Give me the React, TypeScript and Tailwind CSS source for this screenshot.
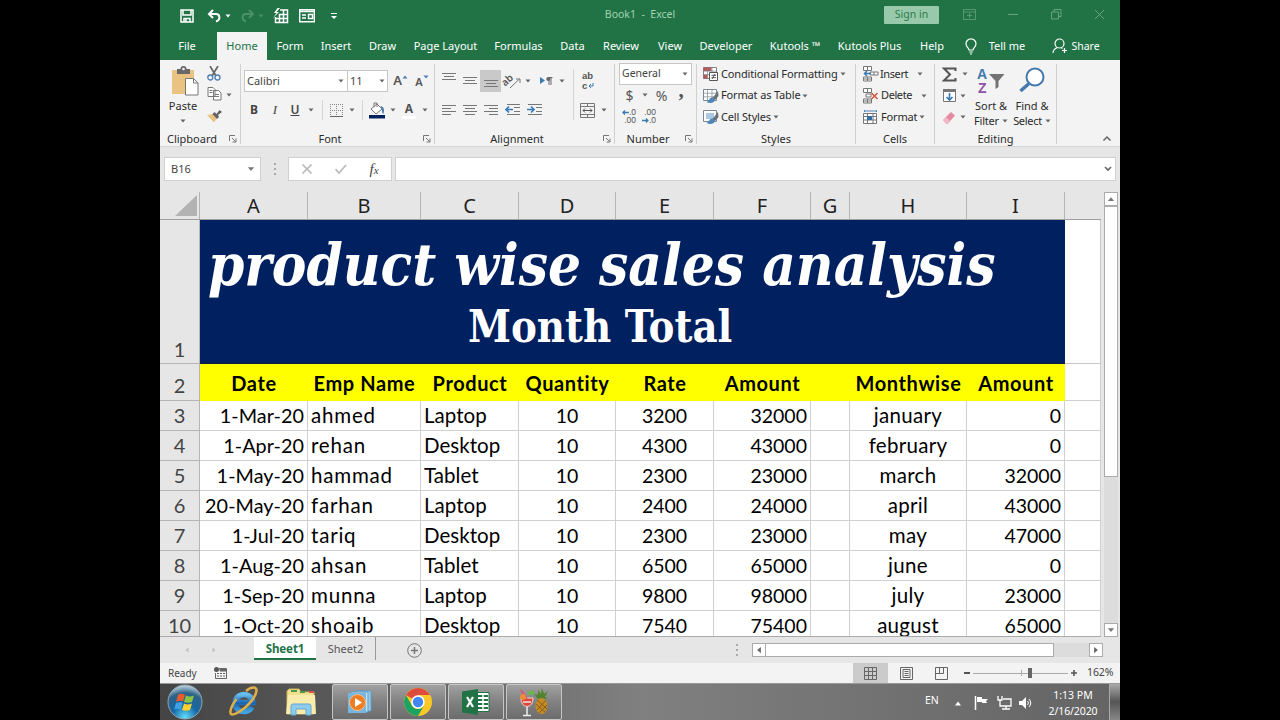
import type { ReactNode } from 'react';
import clsx from 'clsx';

const tabs = [
  { label: 'File', width: 'w-[54px]' },
  { label: 'Home', width: 'w-[50px]', active: true },
  { label: 'Form', width: 'w-[46px]' },
  { label: 'Insert', width: 'w-[46px]' },
  { label: 'Draw', width: 'w-[47px]' },
  { label: 'Page Layout', width: 'w-[79px]' },
  { label: 'Formulas', width: 'w-[67px]' },
  { label: 'Data', width: 'w-[41px]' },
  { label: 'Review', width: 'w-[56px]' },
  { label: 'View', width: 'w-[42px]' },
  { label: 'Developer', width: 'w-[70px]' },
  { label: 'Kutools ™', width: 'w-[68px]' },
  { label: 'Kutools Plus', width: 'w-[81px]' },
  { label: 'Help', width: 'w-[44px]' },
];

const columns = [
  { name: 'A', width: 'w-[108px]', header: 'Date', align: 'justify-end pr-[3px] text-[19.8px] tracking-[0.05px]' },
  { name: 'B', width: 'w-[113px]', header: 'Emp Name', align: 'justify-start pl-[3px] text-[20.5px] tracking-[0.8px]' },
  { name: 'C', width: 'w-[98px]', header: 'Product', align: 'justify-start pl-[3px] text-[20.5px] tracking-[0.05px]' },
  { name: 'D', width: 'w-[97px]', header: 'Quantity', align: 'justify-center' },
  { name: 'E', width: 'w-[98px]', header: 'Rate', align: 'justify-center' },
  { name: 'F', width: 'w-[97px]', header: 'Amount', align: 'justify-end pr-[3px]' },
  { name: 'G', width: 'w-[39px]', header: '', align: 'justify-center' },
  { name: 'H', width: 'w-[117px]', header: 'Monthwise', align: 'justify-center text-[20.5px] tracking-[0.3px]' },
  { name: 'I', width: 'w-[98px]', header: 'Amount', align: 'justify-end pr-[3px]' },
];

const rows = [
  ['1-Mar-20', 'ahmed', 'Laptop', '10', '3200', '32000', '', 'january', '0'],
  ['1-Apr-20', 'rehan', 'Desktop', '10', '4300', '43000', '', 'february', '0'],
  ['1-May-20', 'hammad', 'Tablet', '10', '2300', '23000', '', 'march', '32000'],
  ['20-May-20', 'farhan', 'Laptop', '10', '2400', '24000', '', 'april', '43000'],
  ['1-Jul-20', 'tariq', 'Desktop', '10', '2300', '23000', '', 'may', '47000'],
  ['1-Aug-20', 'ahsan', 'Tablet', '10', '6500', '65000', '', 'june', '0'],
  ['1-Sep-20', 'munna', 'Laptop', '10', '9800', '98000', '', 'july', '23000'],
  ['1-Oct-20', 'shoaib', 'Desktop', '10', '7540', '75400', '', 'august', '65000'],
];

function Slot({ className, children }: { className?: string; children?: ReactNode }) {
  return <div className={clsx('flex shrink-0 items-center justify-center', className)}>{children}</div>;
}

function Arrow({ className = 'text-[#666]' }: { className?: string }) {
  return (
    <svg width="6" height="4" viewBox="0 0 6 4" className={clsx('shrink-0', className)}>
      <path d="M.5 .5h5L3 3.5z" fill="currentColor" />
    </svg>
  );
}

function Launcher() {
  return (
    <svg width="8" height="8" viewBox="0 0 8 8" fill="none" stroke="#777">
      <path d="M.5 6V.5H6M3 3l3.5 3.5M7 3.500V7H3.500" />
    </svg>
  );
}

function Lines({ d }: { d: string }) {
  return (
    <svg width="14" height="14" viewBox="0 0 14 14" stroke="#777" fill="none">
      <path d={d} />
    </svg>
  );
}

function Group({ label, width, labelWidth, launcher, children }: { label: string; width: string; labelWidth: string; launcher?: boolean; children: ReactNode }) {
  return (
    <div className={clsx('flex h-[86px] shrink-0 flex-col', width)}>
      <div className="flex h-[72px] flex-1">
        <div className="min-w-0 flex-1">{children}</div>
        <div className="mt-[4px] w-px bg-[#d0d0d0]" />
      </div>
      <div className="flex h-[14px] items-center">
        <div className={clsx('text-center text-[11px] leading-[14px]', labelWidth)}>{label}</div>
        {launcher && <Launcher />}
        <div className="ml-auto h-[12px] w-px self-start bg-[#d0d0d0]" />
      </div>
    </div>
  );
}

/* Title bar with quick access icons */
function TitleBar() {
  return (
    <div className="flex h-[32px] items-center text-[11px]">
      <Slot className="ml-[20px] w-[14px]">
        <svg width="14" height="14" viewBox="0 0 14 14" fill="none" stroke="#fff" strokeWidth="1.500">
          <path d="M1 1h12v12H1zM3 1v5h8V1M4 13V9.500h6V13M6 10v3" />
        </svg>
      </Slot>
      <Slot className="ml-[13px] w-[15px]">
        <svg width="15" height="14" viewBox="0 0 15 14" fill="none" stroke="#fff" strokeWidth="2">
          <path d="M6 1L2 5l4 4M2 5h7c4 0 5 6 0 7.500" />
        </svg>
      </Slot>
      <Slot className="w-[12px]"><Arrow className="text-white" /></Slot>
      <Slot className="ml-[6px] w-[15px]">
        <svg width="15" height="14" viewBox="0 0 15 14" fill="none" stroke="#4d9168" strokeWidth="2">
          <path d="M9 1l4 4-4 4M13 5H6C2 5 1 11 6 12.500" />
        </svg>
      </Slot>
      <Slot className="w-[12px]"><Arrow className="text-[#4d9168]" /></Slot>
      <Slot className="ml-[5px] w-[17px]">
        <svg width="17" height="16" viewBox="0 0 17 16" fill="none" stroke="#fff">
          <path d="M8 2h7.500v12.500H3.500V9M3.500 10.500h12M7 6.500h8.500M7.500 6v8.500M11.500 2v12.500" strokeWidth="1.500" />
          <path d="M5.500 0L2 5h2.500L1 10l6-6H4.500L8 0z" fill="#fff" stroke="none" />
        </svg>
      </Slot>
      <Slot className="ml-[10px] w-[16px]">
        <svg width="16" height="14" viewBox="0 0 16 14" fill="none" stroke="#fff">
          <path d="M.7 .7h14.600v12H.7zM.7 2.500h14.600M3 6h4M3 9h4M9.500 5.500h4v4h-4z" strokeWidth="1.400" />
        </svg>
      </Slot>
      <Slot className="ml-[15px] w-[8px]">
        <svg width="8" height="8" viewBox="0 0 8 8"><path d="M1 1.500h6" stroke="#fff" /><path d="M1 4h6L4 7z" fill="#fff" /></svg>
      </Slot>
      <div className="ml-[265px] w-[74px] whitespace-pre pb-[3px] text-center text-[10.500px] text-[#a3d2b2]">Book1  -  Excel</div>
      <div className="ml-[207px] mb-[3px] flex h-[18px] w-[55px] items-center justify-center rounded-[1px] bg-[#98c9aa] text-[10.500px] text-[#2c7a4a]">Sign in</div>
      <Slot className="ml-[24px] mb-[3px] w-[14px]">
        <svg width="14" height="11" viewBox="0 0 14 11" fill="none" stroke="#579a71"><path d="M.5 .5h12v10H.5zM.5 3h12M4 6.500h5M6.500 4v5" /></svg>
      </Slot>
      <Slot className="ml-[30px] mb-[3px] w-[12px]"><span className="h-px w-[10px] bg-[#6ba580]" /></Slot>
      <Slot className="ml-[32px] mb-[3px] w-[11px]">
        <svg width="11" height="11" viewBox="0 0 11 11" fill="none" stroke="#6ba580"><path d="M.5 3h7v7h-7zM3 3V.5h7v7H7.500" /></svg>
      </Slot>
      <Slot className="ml-[32px] mb-[3px] w-[11px]">
        <svg width="11" height="11" viewBox="0 0 11 11" stroke="#6ba580"><path d="M1 1l9 9M10 1l-9 9" /></svg>
      </Slot>
    </div>
  );
}

function RibbonTabs() {
  return (
    <div className="flex h-[28px] text-[11px] text-white">
      {tabs.map((tab, index) => (
        <div
          key={index}
          className={clsx('flex shrink-0 items-center justify-center whitespace-nowrap', tab.width, tab.active && 'ml-[3px] bg-[#f3f3f3] text-[#217346]')}
        >
          {tab.label}
        </div>
      ))}
      <Slot className="ml-[6px] w-[22px]">
        <svg width="12" height="17" viewBox="0 0 12 17" fill="none" stroke="#fff" strokeWidth="1.200">
          <path d="M4 12c0-2-3-3-3-6.200a5 5 0 0 1 10 0C11 9 8 10 8 12zM4.200 14h3.600M5 16h2" />
        </svg>
      </Slot>
      <div className="ml-[-1px] flex w-[52px] items-center justify-center text-[11px]">Tell me</div>
      <Slot className="ml-[17px] w-[20px]">
        <svg width="16" height="16" viewBox="0 0 16 16" fill="none" stroke="#fff" strokeWidth="1.200">
          <circle cx="7.500" cy="5.500" r="4.500" /><path d="M1 15c0-3 2-4.500 4.500-5.500M10 12.500h5M12.500 10v5M9 9.500l1.500 1" />
        </svg>
      </Slot>
      <div className="flex w-[31px] items-center justify-center pt-px text-[10.500px]">Share</div>
    </div>
  );
}

function FormatIcon({ kind }: { kind: 'rules' | 'table' | 'cell' }) {
  return (
    <svg width="16" height="16" viewBox="0 0 16 16" fill="none" stroke="#7d8790">
      <path d="M.5 1.500h13v11H.5z" fill="#fff" />
      {kind === 'rules' && <path d="M.5 1.500h8v3.500h-8zM.5 8.500h4v4h-4z" fill="#b8564f" stroke="none" />}
      {kind === 'cell' && <path d="M3 4h8v6H3z" fill="#a9c8e4" stroke="none" />}
      {kind !== 'cell' && <path d="M.5 5.200h13M.5 8.800h13M4.500 1.500v11M9 1.500v11" strokeWidth=".7" />}
      {kind === 'rules' ? (
        <path d="M6.500 6.500h8v8h-8zM8.500 9.300h4.500M8.500 11.700h4.500M12 8l-3 5" fill="#fff" stroke="#555" />
      ) : (
        <>
          <path d="M15 3l-5.500 7 2.500 2L15.500 8z" fill="#6b6f74" stroke="none" />
          <path d="M10 9.500c-4-.5-3.500 3.500-6.500 4.500 3.500 2 8.500 1 8.500-2.500z" fill="#4d87ba" stroke="none" />
        </>
      )}
    </svg>
  );
}

function CellsIcon({ kind }: { kind: 'insert' | 'delete' | 'format' }) {
  return (
    <svg width="16" height="16" viewBox="0 0 16 16" fill="none" stroke="#777">
      {kind === 'format' ? (
        <>
          <path d="M.5 4.500h13v10H.5zM.5 7.500h13M.5 11h13M4.500 4.500v10M10 4.500v10" fill="#fff" />
          <path d="M4 7h5v4H4z" fill="#2f6fa8" stroke="none" />
          <path d="M1.500 1v2M1.500 2h12M13.500 1v2" stroke="#4d87ba" />
        </>
      ) : (
        <>
          <path d="M.5 .5h8v4h-8zM.5 11h8v4h-8zM4.500 .5v4M4.500 11v4M.5 13h8" fill="#fff" />
          {kind === 'insert' ? (
            <>
              <path d="M7 6h8v3H7zM11 6v3" fill="#fff" />
              <path d="M8 7.500H1M4 5L1.500 7.500 4 10" stroke="#3a7ab5" strokeWidth="1.500" />
            </>
          ) : (
            <>
              <path d="M3 6h5v3H3z" fill="#fff" />
              <path d="M8.500 5l6 6M14.500 5l-6 6" stroke="#d2573f" strokeWidth="1.500" />
            </>
          )}
        </>
      )}
    </svg>
  );
}

function Ribbon() {
  return (
    <div className="flex h-[87px] border-b border-[#d5d5d5] bg-[#f3f3f3] text-[11px] text-[#2b2b2b]">
      <Group label="Clipboard" width="w-[81px]" labelWidth="w-[69px] pr-[5px]" launcher>
        <div className="flex">
          <div className="flex w-[46px] flex-col items-center pt-[6px]">
            <svg width="28" height="30" viewBox="0 0 28 30" fill="none" className="ml-[3px]">
              <path d="M1 4h22v24H1z" fill="#eac282" />
              <path d="M6 8V3h3.500a3 3 0 0 1 6 0H19v5z" fill="#686868" /><circle cx="12.500" cy="3" r="1.300" fill="#f3f3f3" />
              <path d="M14.500 12.500h8l4.500 4.500v12H14.500z" fill="#fff" stroke="#777" /><path d="M22.500 12.500V17H27" stroke="#777" />
            </svg>
            <div className="mt-[2px] leading-[16px]">Paste</div>
            <div className="mt-[5px] flex"><Arrow /></div>
          </div>
          <div className="w-[16px] pt-[4px]">
            <Slot className="h-[18px]">
              <svg width="14" height="15" viewBox="0 0 14 15" fill="none">
                <path d="M3 0l6 10M11 0L5 10" stroke="#666" strokeWidth="1.700" />
                <circle cx="3.300" cy="11.500" r="2.500" stroke="#4d7fb3" strokeWidth="1.300" /><circle cx="10.500" cy="11.500" r="2.500" stroke="#4d7fb3" strokeWidth="1.300" />
              </svg>
            </Slot>
            <Slot className="h-[24px]">
              <svg width="15" height="14" viewBox="0 0 15 14" stroke="#777" fill="#fff">
                <path d="M1 .5h5l2 2v7H1zM2.500 3.500h3M2.500 5.500h3M6.500 3.500h5l2.500 2.500v7H6.500zM8 7.500h4M8 9.500h4" />
              </svg>
            </Slot>
            <Slot className="h-[20px]">
              <svg width="15" height="14" viewBox="0 0 15 14">
                <path d="M0 6l6-1 4 4-3 4.500z" fill="#eac282" /><path d="M5.500 5l2-2 2 2 3-4 2.500 2-4 3 1 2-2 2z" fill="#626262" />
              </svg>
            </Slot>
          </div>
          <Slot className="mt-[24px] h-[22px] w-[14px]"><Arrow /></Slot>
        </div>
      </Group>

      <Group label="Font" width="w-[194px]" labelWidth="w-[182px] pr-[4px]" launcher>
        <div className="flex pt-[10px] pl-[3px] text-[#444]">
          <div className="flex h-[22px] w-[104px] items-center justify-between border border-[#c6c6c6] bg-white pl-[2px] pr-[3px]">Calibri<Arrow /></div>
          <div className="-ml-px flex h-[22px] w-[41px] items-center justify-between border border-[#c6c6c6] bg-white px-[2px]">11<Arrow /></div>
          <Slot className="w-[25px] text-[13px] font-semibold text-[#555]">A<Arrow className="mb-[9px] rotate-180 text-[#4d7fb3]" /></Slot>
          <Slot className="w-[18px] pt-[2px] text-[11px] font-semibold text-[#555]">A<Arrow className="mb-[11px] text-[#4d7fb3]" /></Slot>
        </div>
        <div className="mt-[7px] flex h-[22px] pl-[3px] text-[12px] text-[#444]">
          <Slot className="w-[20px] font-bold">B</Slot>
          <Slot className="w-[22px] font-['Liberation_Serif'] text-[13px] italic">I</Slot>
          <Slot className="w-[18px] font-semibold underline">U</Slot>
          <Slot className="w-[14px]"><Arrow /></Slot>
          <Slot className="w-[8px]"><span className="h-[20px] w-px bg-[#d5d5d5]" /></Slot>
          <Slot className="w-[20px]">
            <svg width="13" height="13" viewBox="0 0 13 13" fill="none" stroke="#888"><path d="M.5 0v12M6.500 0v12M12.500 0v12M0 .5h13M0 6.500h13" strokeDasharray="1 1" /><path d="M0 12.500h13" stroke="#666" /></svg>
          </Slot>
          <Slot className="w-[12px]"><Arrow /></Slot>
          <Slot className="w-[8px]"><span className="h-[20px] w-px bg-[#d5d5d5]" /></Slot>
          <Slot className="w-[22px]">
            <svg width="16" height="17" viewBox="0 0 16 17" fill="none">
              <path d="M2 7l6-5 5 5-6 5z" fill="#fff" stroke="#777" /><path d="M5 5V1h3v4" stroke="#777" />
              <path d="M11.500 4c4 1 4 4 3 8-2-1-1-4-3-8z" fill="#4d7fb3" /><path d="M0 13h16v3.500H0z" fill="#002060" />
            </svg>
          </Slot>
          <Slot className="w-[10px]"><Arrow /></Slot>
          <Slot className="w-[22px]"><span className="flex h-[17px] w-[14px] items-start justify-center border-b-[3px] border-white text-[12px] font-bold leading-[14px] text-[#555]">A</span></Slot>
          <Slot className="w-[9px]"><Arrow /></Slot>
        </div>
      </Group>

      <Group label="Alignment" width="w-[180px]" labelWidth="w-[168px] pr-[4px]" launcher>
        <div className="flex">
          <div className="w-[133px]">
            <div className="mt-[10px] flex h-[22px] pl-[3px]">
              <Slot className="w-[22px] pb-[8px]"><Lines d="M0 3.500h14M2 6.500h10M0 9.500h14" /></Slot>
              <Slot className="w-[20px]"><Lines d="M0 3.500h14M2 6.500h10M0 9.500h14" /></Slot>
              <Slot className="w-[21px] bg-[#c9c9c9] pt-[6px]"><Lines d="M0 3.500h14M2 6.500h10M0 9.500h14" /></Slot>
              <Slot className="w-[24px]">
                <svg width="16" height="15" viewBox="0 0 16 15" className="overflow-visible"><text x="-1" y="10" fontSize="10" fontWeight="600" fill="#555" transform="rotate(-42 3 10)">ab</text><path d="M5 14L14.500 5M11 5h4v4" fill="none" stroke="#777" /></svg>
              </Slot>
              <Slot className="w-[6px]"><Arrow /></Slot>
              <Slot className="ml-[3px] w-[24px]">
                <svg width="13" height="10" viewBox="0 0 13 10"><path d="M0 1l5 3.500L0 8z" fill="#3a7ab5" /><path d="M9 9V1.500h3.500M11 1v8" stroke="#666" fill="none" /><circle cx="8.300" cy="3" r="2" fill="#666" /></svg>
              </Slot>
              <Slot className="w-[8px]"><Arrow /></Slot>
            </div>
            <div className="mt-[7px] flex h-[22px] pl-[3px]">
              <Slot className="w-[22px]"><Lines d="M0 2.500h14M0 5.500h9M0 8.500h14M0 11.500h9" /></Slot>
              <Slot className="w-[20px]"><Lines d="M0 2.500h14M2 5.500h10M0 8.500h14M2 11.500h10" /></Slot>
              <Slot className="w-[21px]"><Lines d="M0 2.500h14M5 5.500h9M0 8.500h14M5 11.500h9" /></Slot>
              <Slot className="w-[24px]">
                <svg width="16" height="14" viewBox="0 0 16 14" fill="none" stroke="#777"><path d="M2 1.500h13M9 4.500h6M9 8.500h6M2 11.500h13" /><path d="M8 6.500H1M4 3.500l-3 3 3 3" stroke="#3a7ab5" strokeWidth="1.700" /></svg>
              </Slot>
              <Slot className="w-[19px]">
                <svg width="16" height="14" viewBox="0 0 16 14" fill="none" stroke="#777"><path d="M1 1.500h14M9 4.500h6M9 8.500h6M1 11.500h14" /><path d="M0 6.500h7M4 3.500l3 3-3 3" stroke="#3a7ab5" strokeWidth="1.700" /></svg>
              </Slot>
            </div>
          </div>
          <div className="ml-[5px] mt-[9px] h-[51px] w-px bg-[#d5d5d5]" />
          <div className="w-[38px]">
            <Slot className="mt-[10px] h-[22px] w-[28px]">
              <svg width="14" height="18" viewBox="0 0 14 18" fill="#555" className="overflow-visible font-['Liberation_Sans',sans-serif]">
                <text x="1" y="6.500" fontSize="9.500" fontWeight="600">ab</text>
                <text x="1" y="17" fontSize="9.500" fontWeight="600">c</text>
                <path d="M12 11v3H8.500M10 12l-2 2 2 2" fill="none" stroke="#3a7ab5" />
              </svg>
            </Slot>
            <div className="mt-[7px] flex h-[22px]">
              <Slot className="w-[27px]">
                <svg width="15" height="15" viewBox="0 0 15 15" fill="none" stroke="#777"><path d="M.5 .5h14v14H.5zM.5 3.500h14M.5 11.500h14M7.500 .5v3M7.500 11.500v3" /><path d="M3 7.500h9M5 5.500l-2 2 2 2M10 5.500l2 2-2 2" stroke="#555" /></svg>
              </Slot>
              <Slot className="w-[6px]"><Arrow /></Slot>
            </div>
          </div>
        </div>
      </Group>

      <Group label="Number" width="w-[82px]" labelWidth="w-[70px] pr-[4px]" launcher>
        <div className="ml-[4px] mt-[3px] flex h-[22px] w-[73px] items-center justify-between border border-[#c6c6c6] bg-white pl-[2px] pr-[3px] text-[10.500px] text-[#444]">General<Arrow /></div>
        <div className="flex h-[20px] pl-[4px] text-[14px] text-[#555]">
          <Slot className="w-[21px]">$</Slot>
          <Slot className="w-[9px]"><Arrow /></Slot>
          <Slot className="w-[25px]">%</Slot>
          <Slot className="w-[14px] pb-[9px] font-['Liberation_Serif'] text-[21px] font-bold">,</Slot>
        </div>
        <div className="flex h-[22px] gap-[6px] pl-[7px] pt-[2px] font-['Liberation_Sans',sans-serif] text-[8.500px] leading-[8px] text-[#555]">
          <div className="w-[14px] pt-px text-right">
            <div className="flex items-center justify-end"><svg width="7" height="7" viewBox="0 0 7 7" fill="none" stroke="#3a7ab5"><path d="M7 3.500H1M3 1.500l-2 2 2 2" strokeWidth="1.300" /></svg>.0</div>
            <div>.00</div>
          </div>
          <div className="w-[14px] pt-px text-right">
            <div>.00</div>
            <div className="flex items-center justify-end"><svg width="7" height="7" viewBox="0 0 7 7" fill="none" stroke="#3a7ab5"><path d="M0 3.500h6M4 1.500l2 2-2 2" strokeWidth="1.300" /></svg>.0</div>
          </div>
        </div>
      </Group>

      <Group label="Styles" width="w-[159px]" labelWidth="w-[158px]">
        <div className="flex flex-col pl-[6px] pt-[3px]">
          <div className="flex h-[22px] items-center"><FormatIcon kind="rules" /><span className="ml-[2px] w-[119px] whitespace-nowrap tracking-[-0.15px]">Conditional Formatting</span><Arrow /></div>
          <div className="flex h-[21px] items-center"><FormatIcon kind="table" /><span className="ml-[2px] w-[81px] whitespace-nowrap tracking-[-0.15px]">Format as Table</span><Arrow /></div>
          <div className="flex h-[22px] items-center"><FormatIcon kind="cell" /><span className="ml-[2px] w-[52px] whitespace-nowrap tracking-[-0.15px]">Cell Styles</span><Arrow /></div>
        </div>
      </Group>

      <Group label="Cells" width="w-[79px]" labelWidth="w-[78px]">
        <div className="flex flex-col pl-[7px] pt-[3px] tracking-[-0.15px]">
          <div className="flex h-[22px] items-center"><CellsIcon kind="insert" /><span className="ml-[1px] w-[37px] tracking-[-0.4px]">Insert</span><Arrow /></div>
          <div className="flex h-[21px] items-center"><CellsIcon kind="delete" /><span className="ml-[2px] w-[40px] tracking-[-0.4px]">Delete</span><Arrow /></div>
          <div className="flex h-[22px] items-center"><CellsIcon kind="format" /><span className="ml-[2px] w-[38px]">Format</span><Arrow /></div>
        </div>
      </Group>

      <Group label="Editing" width="w-[122px]" labelWidth="w-[121px]">
        <div className="flex">
          <div className="w-[35px] pl-[7px] pt-[3px]">
            <div className="flex h-[22px] items-center gap-[5px]">
              <svg width="15" height="15" viewBox="0 0 15 15" fill="none" stroke="#555" strokeWidth="2"><path d="M13.500 4V1.500H2l6 6-6 6h11.500V11" /></svg>
              <Arrow />
            </div>
            <div className="flex h-[21px] items-center gap-[3px]">
              <svg width="15" height="15" viewBox="0 0 15 15" fill="none"><path d="M1.500 1.500h12v12h-12z" fill="#fff" stroke="#777" /><path d="M1 1h13v3H1z" fill="#777" /><path d="M7.500 5v7M4.500 9l3 3 3-3" stroke="#3a7ab5" strokeWidth="1.700" /></svg>
              <Arrow />
            </div>
            <div className="flex h-[22px] items-center gap-[3px]">
              <svg width="15" height="13" viewBox="0 0 15 13"><path d="M1 9l8-8 4 3.500-7 8H4z" fill="#e58a9f" /><path d="M1 9l3-3 4 4-2 2.500H4z" fill="#f0b9c4" /></svg>
              <Arrow />
            </div>
          </div>
          <div className="flex w-[42px] flex-col items-center pt-[6px] leading-[15px]">
            <svg width="30" height="28" viewBox="0 0 30 28" className="overflow-visible font-['Liberation_Sans',sans-serif]">
              <text x="1" y="12.500" fontSize="14" fontWeight="600" fill="#3f78ae">A</text>
              <text x="2" y="26.500" fontSize="14" fontWeight="600" fill="#9250a8">Z</text>
              <path d="M13 8h15.500l-6 7v6l-3 2v-8z" fill="#737373" />
            </svg>
            <span className="mt-[4px] whitespace-nowrap">Sort &amp;</span>
            <span className="flex items-center gap-[3px] tracking-[-0.2px]">Filter<Arrow /></span>
          </div>
          <div className="flex w-[40px] flex-col items-center pt-[7px] leading-[15px]">
            <svg width="28" height="27" viewBox="0 0 28 27" fill="none"><circle cx="17" cy="10" r="8.500" fill="#fff" stroke="#4379ad" strokeWidth="2" /><path d="M11 16.500l-8.500 7.500" stroke="#4379ad" strokeWidth="3.500" /></svg>
            <span className="mt-[4px] whitespace-nowrap">Find &amp;</span>
            <span className="flex items-center gap-[3px] tracking-[-0.3px]">Select<Arrow /></span>
          </div>
        </div>
      </Group>
      <div className="ml-auto flex items-end pb-[4px] pr-[8px]">
        <svg width="10" height="7" viewBox="0 0 10 7" fill="none" stroke="#666" strokeWidth="1.500"><path d="M1.500 5.500L5 2l3.500 3.500" /></svg>
      </div>
    </div>
  );
}

function FormulaBar() {
  return (
    <div className="flex h-[45px] items-center bg-[#e6e6e6] pb-px pl-[4px] pr-[4px]">
      <div className="flex h-[24px] w-[97px] items-center justify-between border border-[#d0d0d0] bg-white pl-[6px] pr-[6px] text-[11px] text-[#444]">B16<Arrow className="scale-125 text-[#777]" /></div>
      <Slot className="w-[27px]">
        <svg width="2" height="12" viewBox="0 0 2 12" fill="#aaa"><path d="M0 0h2v2H0zM0 5h2v2H0zM0 10h2v2H0z" /></svg>
      </Slot>
      <div className="flex h-[24px] w-[104px] items-center border border-[#d0d0d0] bg-white">
        <Slot className="w-[35px]"><svg width="10" height="10" viewBox="0 0 10 10" stroke="#bcbcbc" strokeWidth="1.600"><path d="M.5 .5l9 9M9.500 .5l-9 9" /></svg></Slot>
        <Slot className="w-[33px]"><svg width="12" height="10" viewBox="0 0 12 10" fill="none" stroke="#bcbcbc" strokeWidth="1.800"><path d="M.5 5L4 9l7-8" /></svg></Slot>
        <Slot className="w-[34px] font-['Liberation_Serif'] text-[15px] italic text-[#444]">f<span className="pt-[3px] text-[11px]">x</span></Slot>
      </div>
      <div className="ml-[3px] flex h-[24px] flex-1 items-center justify-end border border-[#d0d0d0] bg-white pr-[3px]">
        <svg width="8" height="6" viewBox="0 0 8 6" fill="none" stroke="#666" strokeWidth="1.600"><path d="M1 1l3 3 3-3" /></svg>
      </div>
    </div>
  );
}

function Sheet() {
  return (
    <div className="flex h-[445px] bg-[#e6e6e6]">
      <div className="h-[445px] w-[941px] overflow-hidden border-b border-[#ababab] font-['Lato',sans-serif] text-[19.500px] text-black [font-variant-ligatures:none]">
        {/* Column headers */}
        <div className="flex h-[28px] border-b border-[#9f9f9f] font-['Noto_Sans',sans-serif]">
          <div className="flex w-[40px] items-end justify-end border-r border-[#b5b5b5] pb-[3px] pr-[2px]">
            <svg width="22" height="21" viewBox="0 0 22 21"><path d="M22 0v21H0z" fill="#b3b3b3" /></svg>
          </div>
          {columns.map((col) => (
            <div key={col.name} className={clsx('flex items-center justify-center border-r border-[#b5b5b5] text-[20px] text-[#222]', col.width)}>{col.name}</div>
          ))}
        </div>
        {/* Title row */}
        <div className="flex h-[144px]">
          <div className="flex w-[40px] items-end justify-center border-r border-b border-[#b5b5b5] pb-[2px] text-[20px] leading-[24px] text-[#444]">1</div>
          <div className="flex w-[865px] flex-col border-b border-[#101c40] bg-[#002060] font-['DejaVu_Serif_Condensed','DejaVu_Serif',serif] font-bold whitespace-nowrap text-white">
            <div className="ml-[8px] mt-[10px] h-[70px] w-[790px] origin-left scale-x-[0.996] text-[58px] leading-[70px] italic">product wise sales analysis</div>
            <div className="ml-[268px] mt-[2px] h-[50px] w-[270px] origin-left scale-x-[0.98] text-[44px] leading-[50px]">Month Total</div>
          </div>
          <div className="w-[36px] border-r border-b border-[#c8c8c8] bg-white" />
        </div>
        <div className="flex h-[37px]">
          <div className="flex w-[40px] items-center justify-center border-r border-b border-[#b5b5b5] pt-[6px] text-[20px] text-[#444]">2</div>
          <div className="flex bg-[#ffff00] text-[20px] font-bold tracking-[0.6px]">
            {columns.map((col) => (
              <div key={col.name} className={clsx('flex items-center justify-center whitespace-nowrap', col.width)}>{col.header}</div>
            ))}
          </div>
          <div className="w-[36px] border-r border-b border-[#d0d0d0] bg-white" />
        </div>
        {rows.map((row, r) => (
          <div key={r} className="flex h-[30px]">
            <div className="flex w-[40px] items-center justify-center border-r border-b border-[#b5b5b5] pb-[2px] text-[20px] text-[#444]">{r + 3}</div>
            {row.map((value, c) => (
              <div key={c} className={clsx('flex items-center border-r border-b border-[#d0d0d0] bg-white whitespace-nowrap', columns[c].width, columns[c].align)}>{value}</div>
            ))}
            <div className="w-[36px] border-r border-b border-[#d0d0d0] bg-white" />
          </div>
        ))}
      </div>
      {/* Vertical scrollbar */}
      <div className="ml-[3px] flex w-[14px] flex-col bg-[#dcdcdc]">
        <Slot className="h-[14px] border border-[#ababab] bg-white"><Arrow className="scale-125 rotate-180 text-[#777]" /></Slot>
        <div className="h-[271px] border border-[#ababab] bg-white" />
        <Slot className="mt-auto h-[14px] border border-[#ababab] bg-white"><Arrow className="scale-125 text-[#777]" /></Slot>
      </div>
    </div>
  );
}

function SheetTabs() {
  return (
    <div className="flex h-[26px] bg-[#e6e6e6] text-[11.500px] text-[#555]">
      <Slot className="ml-[22px] w-[10px]"><Arrow className="rotate-90 text-[#c0c0c0]" /></Slot>
      <Slot className="ml-[17px] w-[10px]"><Arrow className="-rotate-90 text-[#c0c0c0]" /></Slot>
      <div className="ml-[35px] flex h-[23px] w-[62px] items-center justify-center border-b-2 border-[#217346] bg-white pt-[3px] text-[11.500px] font-bold tracking-[-0.1px] text-[#217346]">Sheet1</div>
      <div className="flex h-[23px] w-[60px] items-center justify-center border-r border-[#999] pt-px text-[11px]">Sheet2</div>
      <Slot className="ml-[31px] w-[15px]">
        <svg width="15" height="15" viewBox="0 0 15 15" fill="none" stroke="#777"><circle cx="7.500" cy="7.500" r="6.800" /><path d="M4 7.500h7M7.500 4v7" strokeWidth="1.500" /></svg>
      </Slot>
      <Slot className="ml-[314px] w-[2px]"><svg width="2" height="12" viewBox="0 0 2 12" fill="#aaa"><path d="M0 0h2v2H0zM0 5h2v2H0zM0 10h2v2H0z" /></svg></Slot>
      <div className="ml-[14px] mt-[6px] flex h-[14px] w-[351px] bg-[#dcdcdc]">
        <Slot className="w-[14px] border border-[#ababab] bg-white"><Arrow className="scale-125 rotate-90 text-[#666]" /></Slot>
        <div className="w-[288px] border border-l-0 border-[#ababab] bg-white" />
        <Slot className="ml-auto w-[14px] border border-[#ababab] bg-white"><Arrow className="scale-125 -rotate-90 text-[#666]" /></Slot>
      </div>
    </div>
  );
}

function StatusBar() {
  return (
    <div className="flex h-[20px] items-center bg-[#f3f3f3] text-[10.500px] text-[#444]">
      <span className="ml-[8px] w-[46px] text-[10px]">Ready</span>
      <svg width="13" height="12" viewBox="0 0 13 12" fill="none" stroke="#666"><path d="M5 1.500h7.500v10H1.500V6" /><path d="M6 2h6v2H6z" fill="#666" /><path d="M3 6.500h8M3 9h8" strokeDasharray="2 1" /><circle cx="2.500" cy="2.500" r="2.500" fill="#555" stroke="none" /></svg>
      <Slot className="ml-[626px] h-[20px] w-[35px] bg-[#cbcbcb]">
        <svg width="13" height="13" viewBox="0 0 13 13" fill="none" stroke="#666"><path d="M.5 .5h12v12H.5zM.5 4.500h12M.5 8.500h12M4.500 .5v12M8.500 .5v12" /></svg>
      </Slot>
      <Slot className="w-[36px]">
        <svg width="13" height="13" viewBox="0 0 13 13" fill="none" stroke="#666"><path d="M.5 .5h12v12H.5zM3 2.500h7v8H3zM4.500 4.500h4M4.500 6.500h4M4.500 8.500h4" /></svg>
      </Slot>
      <Slot className="w-[35px]">
        <svg width="13" height="13" viewBox="0 0 13 13" fill="none" stroke="#666"><path d="M.5 .5h12v12H.5zM4.500 .5v6M8.500 .5v6M.5 6.500h8" /></svg>
      </Slot>
      <span className="ml-[5px] h-[2px] w-[6px] bg-[#555]" />
      <svg width="96" height="12" viewBox="0 0 96 12" className="ml-[3px]"><path d="M0 6.500h95" stroke="#aaa" /><path d="M48.500 3v6" stroke="#aaa" /><path d="M55 1h4v10h-4z" fill="#666" /></svg>
      <svg width="8" height="8" viewBox="0 0 8 8" className="ml-px"><path d="M4 1v6M1 4h6" stroke="#555" strokeWidth="1.600" /></svg>
      <span className="ml-[9px] text-[10.500px] tracking-[-0.1px] text-[#444]">162%</span>
    </div>
  );
}

function TaskButton({ children }: { children: ReactNode }) {
  return <div className="mr-[2px] flex h-[36px] w-[56px] items-center justify-center rounded-[2px] border border-[#c5c5c5] bg-gradient-to-b from-[#a1a1a1] via-[#818181] to-[#6c6c6c]">{children}</div>;
}

function Taskbar() {
  return (
    <div className="flex h-[37px] items-center border-t border-[#999] bg-gradient-to-r from-[#444] via-[#808080] to-[#646464] text-white">
      <Slot className="ml-[7px] w-[36px]">
        <svg width="36" height="36" viewBox="0 0 36 36">
          <defs><radialGradient id="orb" cx=".5" cy=".95" r=".95"><stop offset="0" stopColor="#5fe0ff" /><stop offset=".4" stopColor="#1768a5" /><stop offset=".75" stopColor="#2e6187" /><stop offset="1" stopColor="#c6dbe6" /></radialGradient></defs>
          <circle cx="18" cy="18" r="17" fill="url(#orb)" stroke="#90a8b4" />
          <path d="M11 11c3-2 5-1 7 0l-2 6.500c-2-1-4-1-7 0z" fill="#eb5a2b" /><path d="M19 11.500c3 1.500 5 1 8 0l-2 6.500c-3 1-5 1-8 0z" fill="#8dc43f" />
          <path d="M9 19c3-1 5-1 6.700 0l-2 6.500c-2-1-4-1-6.500 0z" fill="#3fa0e6" /><path d="M17 19.500c3 1.500 5 1 8 0l-2 6.500c-3 1-5 1-8 0z" fill="#fcd02f" />
        </svg>
      </Slot>
      <Slot className="ml-[22px] w-[36px]">
        <svg width="34" height="32" viewBox="0 0 34 32" fill="none">
          <defs><linearGradient id="ie" x1="0" y1="0" x2="0" y2="1"><stop offset="0" stopColor="#66bdec" /><stop offset=".5" stopColor="#1763b0" /><stop offset="1" stopColor="#3fa4e0" /></linearGradient></defs>
          <path d="M26 21a9 8.500 0 1 1 1-4.500H11" stroke="url(#ie)" strokeWidth="5.500" />
          <path d="M20 5c5-4.500 11-5 10.500 0-.8 6-8 15-16 20-6 4-11 5-10 0 .5-4 3-8 6-12" stroke="#dfb04a" strokeWidth="2.500" />
        </svg>
      </Slot>
      <Slot className="ml-[22px] w-[36px]">
        <svg width="32" height="30" viewBox="0 0 32 30">
          <path d="M2 4l2-2h10l2 3h13v22H2z" fill="#f1df8c" stroke="#c9b45d" /><path d="M3 8h27l1 19H1z" fill="#f8ecad" /><path d="M6 4h6M15 5h5" stroke="#4a9b4d" strokeWidth="2" /><path d="M24 5h5" stroke="#d9534a" strokeWidth="2" />
          <path d="M6 28v-9q0-2 2-2h16q2 0 2 2v9h-5v-6H11v6z" fill="#8fcbed" stroke="#62a8d0" />
        </svg>
      </Slot>
      <div className="ml-[13px] flex">
        <TaskButton>
          <svg width="26" height="26" viewBox="0 0 26 26"><path d="M8 2h16v20H8z" fill="#9ecbe9" stroke="#5b9cc4" /><path d="M4 3h17v20H4z" fill="#c1e1f5" stroke="#5b9cc4" /><path d="M1 4h18v20H1z" fill="#75b5de" /><circle cx="10.500" cy="13.500" r="8" fill="#ef7d24" stroke="#f9c38e" /><path d="M8 9v9l7-4.500z" fill="#fff" /></svg>
        </TaskButton>
        <TaskButton>
          <svg width="30" height="30" viewBox="0 0 30 30">
            <circle cx="15" cy="15" r="14" fill="#fbc727" />
            <path d="M15 15L2.900 8A14 14 0 0 1 27.100 8H15z" fill="#dd4b3e" /><path d="M2.900 8A14 14 0 0 0 15 29l6.100-10.500a7 7 0 0 1-12.200 0z" fill="#1da261" />
            <circle cx="15" cy="15" r="6.700" fill="#fff" /><circle cx="15" cy="15" r="5.200" fill="#4285f4" />
          </svg>
        </TaskButton>
        <TaskButton>
          <svg width="30" height="28" viewBox="0 0 30 28" fill="none"><path d="M14 4.500h14v19H14z" fill="#fff" stroke="#217346" /><path d="M16 8h11M16 12h11M16 16h11M16 20h11" stroke="#217346" strokeWidth="2" /><path d="M22 6v16" stroke="#fff" strokeWidth="1.500" /><path d="M1 3.500L17 1v26L1 24.500z" fill="#217346" /><path d="M6 9l6 10M12 9L6 19" stroke="#fff" strokeWidth="2.200" /></svg>
        </TaskButton>
        <TaskButton>
          <svg width="30" height="30" viewBox="0 0 30 30" fill="none">
            <path d="M19 12l-4-5 4 1V3l3 4 1-6 2 6 4-3-3 6 2 2z" fill="#4f842c" /><ellipse cx="22.500" cy="19" rx="6" ry="8" fill="#c58b25" /><path d="M17 17l9 8M18 13l10 9M27 13l-9 10M28 18l-8 8" stroke="#76501a" strokeWidth=".8" />
            <path d="M2 11h12q0 8-6 8.500Q2 19 2 11z" fill="#dc473b" stroke="#f2d5d1" /><path d="M8 20v8M4 28.500h8" stroke="#eee" strokeWidth="1.500" /><path d="M2 3l6 9" stroke="#e64f68" strokeWidth="1.500" /><path d="M8 7c3-4 6-4 8-2-1 3-5 4-8 2z" fill="#66b84a" /><circle cx="4" cy="10" r="3" fill="#ef8b38" /><path d="M4 15h8" stroke="#fbe3dc" strokeWidth="1.500" />
          </svg>
        </TaskButton>
      </div>
      {/* System tray */}
      <span className="ml-[361px] w-[14px] pb-[2px] text-[10.500px]">EN</span>
      <svg width="8" height="5" viewBox="0 0 8 5" className="ml-[15px] mt-[3px]"><path d="M1 4.500L4 .5l3 4z" fill="#fff" /></svg>
      <svg width="15" height="14" viewBox="0 0 15 14" className="ml-[12px] mt-[2px]"><path d="M1.500 0v14" stroke="#fff" strokeWidth="1.500" /><path d="M3 1h5v2h6l-2 2 1 2H8V6H3z" fill="#fff" /></svg>
      <svg width="15" height="14" viewBox="0 0 15 14" fill="none" stroke="#fff" strokeWidth="1.300" className="ml-[8px] mt-[2px]"><path d="M6 3h8v7H5M9 10v3M5 13h8M1 0v4h4V0M3 4v6h2" /></svg>
      <svg width="15" height="14" viewBox="0 0 15 14" fill="none" stroke="#fff" className="ml-[7px] mt-[2px]"><path d="M0 5h3l4-4v12L3 9H0z" fill="#fff" stroke="none" /><path d="M8.500 5q2 2 0 4M10 3q3.500 4 0 8" /></svg>
      <div className="ml-[12px] w-[54px] pt-px text-center text-[10.500px] leading-[16px]">
        <div>1:13 PM</div>
        <div className="-mx-1 tracking-[-0.1px]">2/16/2020</div>
      </div>
      <div className="ml-auto h-[36px] w-[11px] border-l border-[#aaa] bg-gradient-to-b from-[#aaa] via-[#555] to-[#888]" />
    </div>
  );
}

export default function App() {
  return (
    <div className="flex h-[720px] w-[1280px] justify-center overflow-hidden bg-black font-['Noto_Sans',sans-serif]">
      <div className="flex h-[720px] w-[960px] flex-col overflow-hidden bg-[#e6e6e6]">
        <div className="h-[60px] bg-[#217346]">
          <TitleBar />
          <RibbonTabs />
        </div>
        <Ribbon />
        <FormulaBar />
        <Sheet />
        <SheetTabs />
        <StatusBar />
        <Taskbar />
      </div>
    </div>
  );
}
